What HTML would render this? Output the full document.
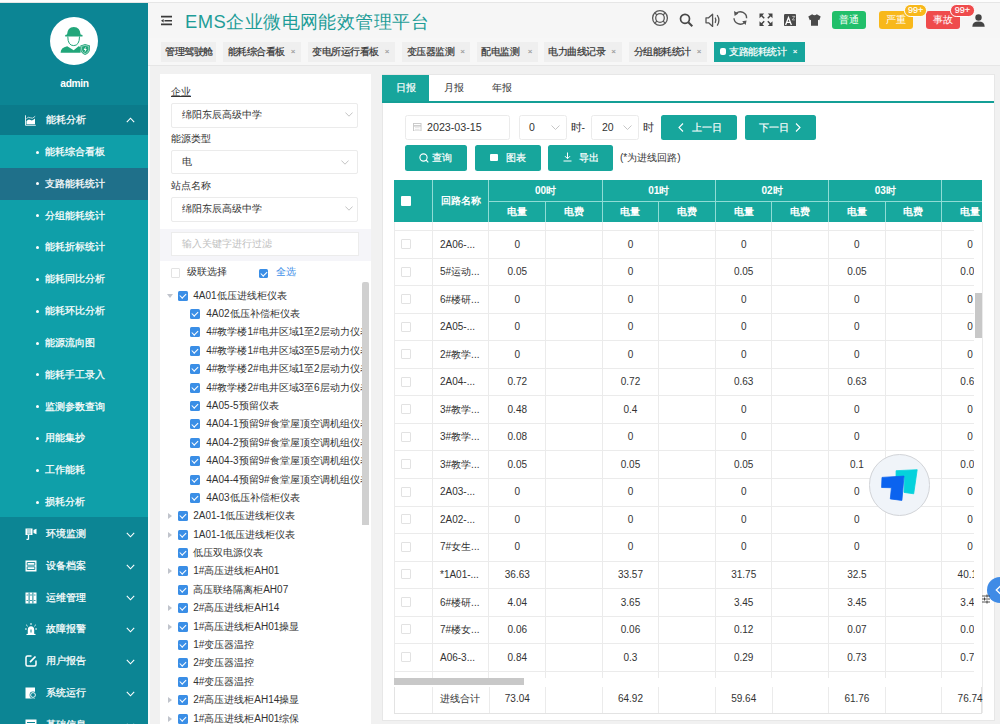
<!DOCTYPE html><html><head><meta charset="utf-8"><style>
*{box-sizing:border-box;margin:0;padding:0}
html,body{width:1000px;height:724px;overflow:hidden;background:#f1f1f1;font-family:"Liberation Sans",sans-serif;color:#333}
.a{position:absolute}
.mi{position:absolute;left:0;width:148px;height:31.8px;color:#fff;font-size:10.2px;line-height:31.8px;white-space:nowrap;-webkit-text-stroke-width:0.25px}
.mi .t{position:absolute;left:46px;top:0}
.mi svg{position:absolute}
.sub{position:absolute;left:0;width:148px;height:31.8px;color:#fff;font-size:10.2px;line-height:31.8px;white-space:nowrap;-webkit-text-stroke-width:0.25px}
.sub .t{position:absolute;left:45.2px;top:0}
.sub .d{position:absolute;left:35.5px;top:14.6px;width:3px;height:3px;border-radius:50%;background:#fff}
.tab{position:absolute;top:41.5px;height:20.5px;background:#efefef;font-size:10px;letter-spacing:-0.5px;line-height:20.5px;color:#333;white-space:nowrap;-webkit-text-stroke-width:0.2px}
.tab .x{position:absolute;top:0;font-size:8px;color:#999}
.lbl{position:absolute;font-size:10px;color:#333;line-height:12px;white-space:nowrap}
.sel{position:absolute;left:171px;width:186.5px;height:24.6px;border:1px solid #ebebeb;border-radius:2px;background:#fff;font-size:10px;line-height:22.6px;padding-left:10px;color:#333;white-space:nowrap}
.sel svg{position:absolute;right:3.6px;top:8px}
.tr{position:absolute;font-size:10px;line-height:14px;color:#333;white-space:nowrap}
.cb{position:absolute;width:10px;height:10px;border-radius:1.5px;background:#3a8ee6}
.cb:after{content:"";position:absolute;left:3.3px;top:1.2px;width:2.6px;height:5px;border:solid #fff;border-width:0 1.3px 1.3px 0;transform:rotate(45deg)}
.btn{position:absolute;background:#17a69c;border-radius:2.5px;color:#fff;font-size:10px;white-space:nowrap}
.hc{position:absolute;color:#fff;font-size:10px;font-weight:bold;text-align:center;white-space:nowrap}
.vl{position:absolute;width:1px;background:#ebebeb}
.hl{position:absolute;height:1px;background:#ebebeb}
.cell{position:absolute;font-size:10px;color:#333;text-align:center;width:56.6px;line-height:14px;white-space:nowrap}
.nm{position:absolute;font-size:10px;color:#333;left:440px;line-height:14px;white-space:nowrap}
.rcb{position:absolute;left:401.5px;width:10px;height:10px;border:1px solid #e2e2e2;border-radius:1px;background:#fff}
</style></head><body>
<div class="a" style="left:0;top:0;width:1000px;height:3px;background:#fdfdfd;border-bottom:1px solid #e6e6e6"></div>
<div class="a" style="left:0;top:3px;width:148px;height:721px;background:#0c8594"></div>
<div class="a" style="left:148px;top:3px;width:1.5px;height:721px;background:#fafafa"></div>
<div class="a" style="left:50.2px;top:16.8px;width:48.1px;height:48.1px;border-radius:50%;background:#fff"></div>
<svg class="a" style="left:48px;top:15px" width="52" height="52" viewBox="48 15 52 52">
<path d="M65.2 36.6 L82.5 36.6 L82.5 35 L80.6 34.6 Q80.2 27 73.8 26.9 Q67.4 27 67 34.6 L65.2 35 Z" fill="#22a67a"/>
<path d="M67.8 36.5 Q67.8 45.6 73.7 45.6 Q79.5 45.6 79.5 36.5" fill="none" stroke="#22a67a" stroke-width="1"/>
<path d="M60.6 52.8 Q60.6 47.6 67.2 46.2 L73.7 50.2 L78.6 46.2 L80.6 47 L80.6 52.8 Z" fill="#22a67a"/>
<path d="M80.4 45.6 L85.1 44.1 L90 45.6 L90 49.6 Q89.5 53.6 85.1 55 Q80.8 53.6 80.4 49.6 Z" fill="#22a67a"/>
<path d="M81.6 46.4 L85.1 45.3 L88.8 46.4 L88.8 49.6 Q88.4 52.6 85.1 53.8 Q81.9 52.6 81.6 49.6 Z" fill="none" stroke="#fff" stroke-width="0.5"/>
<path d="M85.8 46.5 L83.6 50 L85.1 50 L84.4 53 L86.8 49 L85.4 49 Z" fill="#fff"/>
</svg>
<div class="a" style="left:0;top:76.5px;width:149px;text-align:center;color:#fff;font-size:10.2px;letter-spacing:-0.35px;font-weight:bold;line-height:13px">admin</div>
<div class="a" style="left:0;top:104.5px;width:148px;height:30.7px;background:#0b7b8b"></div>
<div class="mi" style="top:104.5px;height:30.7px;line-height:30.7px"><span class="t">能耗分析</span></div>
<svg class="a" style="left:24px;top:114px" width="13" height="13" viewBox="24 114 13 13"><path d="M25.5 115.3 V125.3 H35.8" fill="none" stroke="#fff" stroke-width="1" opacity="0.85"/><path d="M26.3 118.8 Q28.3 116.3 30.3 117.8 Q32.3 119.3 35.2 116.3" fill="none" stroke="#fff" stroke-width="0.9" opacity="0.8"/><path d="M26.5 124.3 V121 Q28.5 118.6 30.5 120 Q32.5 121.2 35 118.6 V124.3 Z" fill="#fff"/></svg>
<svg class="a" style="left:125.5px;top:117px" width="9" height="6" viewBox="0 0 9 6"><path d="M0.8 5.2 L4.5 1.2 L8.2 5.2" fill="none" stroke="#fff" stroke-width="1.1"/></svg>
<div class="a" style="left:0;top:135.2px;width:148px;height:381.8px;background:#0f9fa9"></div>
<div class="a" style="left:0;top:168px;width:148px;height:31.8px;background:#1f708a"></div>
<div class="sub" style="top:136.00px"><span class="d"></span><span class="t">能耗综合看板</span></div>
<div class="sub" style="top:167.82px"><span class="d"></span><span class="t">支路能耗统计</span></div>
<div class="sub" style="top:199.64px"><span class="d"></span><span class="t">分组能耗统计</span></div>
<div class="sub" style="top:231.46px"><span class="d"></span><span class="t">能耗折标统计</span></div>
<div class="sub" style="top:263.28px"><span class="d"></span><span class="t">能耗同比分析</span></div>
<div class="sub" style="top:295.10px"><span class="d"></span><span class="t">能耗环比分析</span></div>
<div class="sub" style="top:326.92px"><span class="d"></span><span class="t">能源流向图</span></div>
<div class="sub" style="top:358.74px"><span class="d"></span><span class="t">能耗手工录入</span></div>
<div class="sub" style="top:390.56px"><span class="d"></span><span class="t">监测参数查询</span></div>
<div class="sub" style="top:422.38px"><span class="d"></span><span class="t">用能集抄</span></div>
<div class="sub" style="top:454.20px"><span class="d"></span><span class="t">工作能耗</span></div>
<div class="sub" style="top:486.02px"><span class="d"></span><span class="t">损耗分析</span></div>
<div class="mi" style="top:518.00px"><span class="t">环境监测</span></div>
<svg class="a" style="left:24.5px;top:528.00px" width="12" height="12" viewBox="0 0 12 12"><path d="M0.5 0.5 H7.5 V7 H0.5 Z" fill="#fff"/><path d="M2 2 H6 M2 4 H6 M2 5.8 H6" stroke="#0c8594" stroke-width="0.6"/><path d="M8.5 2 L11.5 0.8 V6.2 L8.5 5 Z" fill="#fff"/><path d="M3.5 7 V11.5 M1.5 11.5 H3.5" stroke="#fff" stroke-width="1.3"/></svg>
<svg class="a" style="left:125.5px;top:531.80px" width="9" height="6" viewBox="0 0 9 6"><path d="M0.8 0.8 L4.5 4.8 L8.2 0.8" fill="none" stroke="#fff" stroke-width="1.1"/></svg>
<div class="mi" style="top:549.82px"><span class="t">设备档案</span></div>
<svg class="a" style="left:24.5px;top:559.82px" width="12" height="12" viewBox="0 0 12 12"><path d="M0.5 0.5 H11.5 V11.5 H0.5 Z" fill="#fff"/><path d="M2.2 2.5 H9.8 V5.2 H2.2 Z M2.2 6.8 H9.8 V9.5 H2.2 Z" fill="none" stroke="#0c8594" stroke-width="0.9"/></svg>
<svg class="a" style="left:125.5px;top:563.62px" width="9" height="6" viewBox="0 0 9 6"><path d="M0.8 0.8 L4.5 4.8 L8.2 0.8" fill="none" stroke="#fff" stroke-width="1.1"/></svg>
<div class="mi" style="top:581.64px"><span class="t">运维管理</span></div>
<svg class="a" style="left:24.5px;top:591.64px" width="12" height="12" viewBox="0 0 12 12"><path d="M0.5 0.5 H11.5 V11.5 H0.5 Z" fill="#fff"/><path d="M4.1 0.5 V11.5 M7.9 0.5 V11.5" stroke="#0c8594" stroke-width="1"/><path d="M1.5 3 H3.2 M5 3 H7 M8.8 3 H10.5 M1.5 8.5 H3.2 M5 8.5 H7 M8.8 8.5 H10.5" stroke="#0c8594" stroke-width="0.8"/></svg>
<svg class="a" style="left:125.5px;top:595.44px" width="9" height="6" viewBox="0 0 9 6"><path d="M0.8 0.8 L4.5 4.8 L8.2 0.8" fill="none" stroke="#fff" stroke-width="1.1"/></svg>
<div class="mi" style="top:613.46px"><span class="t">故障报警</span></div>
<svg class="a" style="left:24.5px;top:623.46px" width="12" height="12" viewBox="0 0 12 12"><path d="M2.8 11.5 V7 Q2.8 3.3 6 3.3 Q9.2 3.3 9.2 7 V11.5 Z" fill="#fff"/><path d="M6 0 V2 M1.2 1.8 L2.6 3.2 M10.8 1.8 L9.4 3.2 M0 6 H1.8 M10.2 6 H12" stroke="#fff" stroke-width="1"/><path d="M6 6.5 V9.5" stroke="#0c8594" stroke-width="1"/><path d="M1.5 11.5 H10.5" stroke="#fff" stroke-width="1.2"/></svg>
<svg class="a" style="left:125.5px;top:627.26px" width="9" height="6" viewBox="0 0 9 6"><path d="M0.8 0.8 L4.5 4.8 L8.2 0.8" fill="none" stroke="#fff" stroke-width="1.1"/></svg>
<div class="mi" style="top:645.28px"><span class="t">用户报告</span></div>
<svg class="a" style="left:24.5px;top:655.28px" width="12" height="12" viewBox="0 0 12 12"><path d="M6.5 1 H2.5 Q1 1 1 2.5 V9.5 Q1 11 2.5 11 H9.5 Q11 11 11 9.5 V5.5" fill="none" stroke="#fff" stroke-width="1.5"/><path d="M5 7.2 L10.5 1.5" stroke="#fff" stroke-width="1.8"/></svg>
<svg class="a" style="left:125.5px;top:659.08px" width="9" height="6" viewBox="0 0 9 6"><path d="M0.8 0.8 L4.5 4.8 L8.2 0.8" fill="none" stroke="#fff" stroke-width="1.1"/></svg>
<div class="mi" style="top:677.10px"><span class="t">系统运行</span></div>
<svg class="a" style="left:24.5px;top:687.10px" width="12" height="12" viewBox="0 0 12 12"><path d="M0.5 0.5 H10 V11.5 H0.5 Z" fill="#fff"/><circle cx="8" cy="8" r="3.4" fill="#0c8594"/><circle cx="8" cy="8" r="2.4" fill="none" stroke="#fff" stroke-width="0.9"/></svg>
<svg class="a" style="left:125.5px;top:690.90px" width="9" height="6" viewBox="0 0 9 6"><path d="M0.8 0.8 L4.5 4.8 L8.2 0.8" fill="none" stroke="#fff" stroke-width="1.1"/></svg>
<div class="mi" style="top:708.92px"><span class="t">基础信息</span></div>
<svg class="a" style="left:24.5px;top:718.92px" width="12" height="12" viewBox="0 0 12 12"><path d="M0.5 0.5 H11.5 V11.5 H0.5 Z" fill="#fff"/><path d="M2 3.5 H10 M2 7 H10" stroke="#0c8594" stroke-width="1.2"/></svg>
<svg class="a" style="left:125.5px;top:722.72px" width="9" height="6" viewBox="0 0 9 6"><path d="M0.8 0.8 L4.5 4.8 L8.2 0.8" fill="none" stroke="#fff" stroke-width="1.1"/></svg>
<div class="a" style="left:148px;top:3px;width:852px;height:35px;background:#f6f6f6"></div>
<svg class="a" style="left:160px;top:14px" width="14" height="13" viewBox="0 0 14 13"><path d="M1 2.6 H12 M4.5 6.8 H12 M1 10.4 H12" stroke="#3a3a3a" stroke-width="1.6"/><path d="M1 6.8 L3.6 5 V8.6 Z" fill="#3a3a3a"/></svg>
<div class="a" style="left:185px;top:10.5px;letter-spacing:0.45px;font-size:18.4px;line-height:22px;color:#1e9d98;white-space:nowrap">EMS企业微电网能效管理平台</div>
<svg class="a" style="left:651px;top:9px" width="18" height="18" viewBox="0 0 18 18"><circle cx="9" cy="9" r="7.4" fill="none" stroke="#5a5a5a" stroke-width="1.3"/><circle cx="9" cy="9" r="4.3" fill="none" stroke="#5a5a5a" stroke-width="1.3"/><path d="M3.8 3.8 L6 6 M14.2 3.8 L12 6 M3.8 14.2 L6 12 M14.2 14.2 L12 12" stroke="#5a5a5a" stroke-width="1.2"/></svg>
<svg class="a" style="left:679px;top:12px" width="15" height="16" viewBox="0 0 15 16"><circle cx="6" cy="6.8" r="4.5" fill="none" stroke="#484848" stroke-width="1.7"/><path d="M9.3 10.2 L13.3 14.3" stroke="#484848" stroke-width="2"/></svg>
<svg class="a" style="left:705px;top:13px" width="16" height="15" viewBox="0 0 16 15"><path d="M1 4.8 H3.6 L7.6 1.2 V13.4 L3.6 9.8 H1 Z" fill="none" stroke="#555" stroke-width="1.3" stroke-linejoin="round"/><path d="M10.2 4.6 Q11.7 7.3 10.2 10" fill="none" stroke="#555" stroke-width="1.3"/><path d="M12.2 2 Q15.6 7.3 12.2 12.6" fill="none" stroke="#555" stroke-width="1.3"/></svg>
<svg class="a" style="left:728px;top:6px" width="24" height="24" viewBox="0 0 24 24"><path d="M8.3 7.2 A6.3 6.3 0 0 1 18.6 12.2" fill="none" stroke="#555" stroke-width="1.4"/><path d="M6 12.2 A6.3 6.3 0 0 0 16.6 16.4" fill="none" stroke="#555" stroke-width="1.4"/><path d="M6 5 L6.6 10 L10.4 7.6 Z M14.2 15.2 L18.6 14.4 L17.6 19 Z" fill="#555"/></svg>
<svg class="a" style="left:759px;top:13px" width="14" height="14" viewBox="0 0 14 14"><path d="M0.5 0.5 H5.2 L0.5 5.2 Z M13.5 0.5 H8.8 L13.5 5.2 Z M0.5 13 H5.2 L0.5 8.3 Z M13.5 13 H8.8 L13.5 8.3 Z" fill="#444"/><path d="M2 2 L5.2 5.2 M12 2 L8.8 5.2 M2 11.5 L5.2 8.3 M12 11.5 L8.8 8.3" stroke="#444" stroke-width="1.5"/></svg>
<svg class="a" style="left:784.3px;top:14px" width="12.2" height="12.2" viewBox="0 0 12.2 12.2"><rect x="0" y="0" width="12.2" height="12.2" rx="1.2" fill="#4a4a4a"/><path d="M1.6 11 L4.5 3.6 L7.4 11 M2.7 8.4 H6.3" fill="none" stroke="#fff" stroke-width="1.3"/><path d="M8.3 2.4 H10.9 L8.3 5.9 H10.9" fill="none" stroke="#ddd" stroke-width="0.7"/></svg>
<svg class="a" style="left:807.5px;top:14px" width="13" height="12" viewBox="0 0 13 12"><path d="M4.2 0.3 L0.3 2.6 L1.8 6.2 L3 5.7 V11.8 H10 V5.7 L11.2 6.2 L12.7 2.6 L8.8 0.3 Q6.5 2 4.2 0.3 Z" fill="#4a4a4a"/></svg>
<div class="a" style="left:832px;top:10.6px;width:34.4px;height:18px;background:#21bf6a;border-radius:3px;color:#fff;font-size:9.5px;line-height:18px;text-align:center">普通</div>
<div class="a" style="left:879px;top:10.6px;width:34px;height:18px;background:#f8b81b;border-radius:3px;color:#fff;font-size:9.5px;line-height:18px;text-align:center">严重</div>
<div class="a" style="left:926.4px;top:10.6px;width:33.6px;height:18px;background:#ef4b4c;border-radius:3px;color:#fff;font-size:9.5px;line-height:18px;text-align:center">事故</div>
<div class="a" style="left:903.8px;top:4.2px;width:23.6px;height:12.4px;background:#f8b81b;border:1px solid #fff;border-radius:6.2px;color:#fff;font-size:9px;line-height:10.4px;-webkit-text-stroke-width:0.15px;text-align:center">99+</div>
<div class="a" style="left:950px;top:4.2px;width:24.8px;height:12.4px;background:#ef4b4c;border:1px solid #fff;border-radius:6.2px;color:#fff;font-size:9px;line-height:10.4px;-webkit-text-stroke-width:0.15px;text-align:center">99+</div>
<svg class="a" style="left:972px;top:13.5px" width="13" height="13" viewBox="0 0 13 13"><circle cx="6.5" cy="3.5" r="3.2" fill="#444"/><path d="M0.3 12.8 Q0.3 7.5 6.5 7.5 Q12.7 7.5 12.7 12.8 Z" fill="#444"/></svg>
<div class="a" style="left:148px;top:38px;width:852px;height:28px;background:#f7f7f7;border-bottom:1px solid #e6e6e6"></div>
<div class="tab" style="left:160.6px;width:55.4px;padding-left:4.6px">管理驾驶舱</div>
<div class="tab" style="left:223px;width:78.0px;padding-left:4.6px">能耗综合看板<span class="x" style="right:6px">×</span></div>
<div class="tab" style="left:307.8px;width:87.2px;padding-left:4.6px">变电所运行看板<span class="x" style="right:6px">×</span></div>
<div class="tab" style="left:402px;width:68.3px;padding-left:4.6px">变压器监测<span class="x" style="right:6px">×</span></div>
<div class="tab" style="left:476.8px;width:61.2px;padding-left:4.6px">配电监测<span class="x" style="right:6px">×</span></div>
<div class="tab" style="left:543.5px;width:78.0px;padding-left:4.6px">电力曲线记录<span class="x" style="right:6px">×</span></div>
<div class="tab" style="left:629px;width:78.0px;padding-left:4.6px">分组能耗统计<span class="x" style="right:6px">×</span></div>
<div class="tab" style="left:714px;width:91px;background:#17a59c;color:#fff;padding-left:15px">支路能耗统计<span class="x" style="right:8px;color:#fff">×</span></div>
<div class="a" style="left:719.6px;top:48.4px;width:6px;height:6.3px;border-radius:2px;background:#fff"></div>
<div class="a" style="left:160px;top:74.4px;width:210.6px;height:650px;background:#fff"></div>
<div class="lbl" style="left:171px;top:86px;text-decoration:underline">企业</div>
<div class="sel" style="top:103px">绵阳东辰高级中学<svg width="8" height="5" viewBox="0 0 8 5"><path d="M0.4 0.5 L4 4.2 L7.6 0.5" fill="none" stroke="#bdbdbd" stroke-width="0.9"/></svg></div>
<div class="lbl" style="left:171px;top:133.3px">能源类型</div>
<div class="sel" style="top:149.5px">电<svg style="right:7.7px;top:9px" width="8" height="5" viewBox="0 0 8 5"><path d="M0.4 0.5 L4 4.2 L7.6 0.5" fill="none" stroke="#bdbdbd" stroke-width="0.9"/></svg></div>
<div class="lbl" style="left:171px;top:180px">站点名称</div>
<div class="sel" style="top:197px">绵阳东辰高级中学<svg width="8" height="5" viewBox="0 0 8 5"><path d="M0.4 0.5 L4 4.2 L7.6 0.5" fill="none" stroke="#bdbdbd" stroke-width="0.9"/></svg></div>
<div class="a" style="left:160px;top:228.8px;width:210.6px;height:32px;background:#f5f5f9"></div>
<div class="a" style="left:171.2px;top:232px;width:187.5px;height:24.3px;background:#fff;border:1px solid #ececec;font-size:10px;line-height:22.3px;padding-left:9.5px;color:#c0c0c0;white-space:nowrap">输入关键字进行过滤</div>
<div class="a" style="left:170.8px;top:268.4px;width:9.6px;height:9.8px;border:1px solid #e3e3e3;border-radius:1px;background:#fff"></div>
<div class="lbl" style="left:186.6px;top:266px">级联选择</div>
<div class="cb" style="left:258.8px;top:268.6px;width:9.7px;height:9.7px"></div>
<div class="lbl" style="left:276.4px;top:266px;color:#3d8ee8">全选</div>
<div class="a" style="left:160px;top:282px;width:202px;height:442px;overflow:hidden">
<svg class="a" style="left:6.5px;top:11.60px" width="6" height="4" viewBox="0 0 6 4"><path d="M0 0 H6 L3 4 Z" fill="#c0c4cc"/></svg>
<div class="cb" style="left:17.80000000000001px;top:8.60px"></div>
<div class="tr" style="left:33.19999999999999px;top:6.60px">4A01低压进线柜仪表</div>
<div class="cb" style="left:29.80000000000001px;top:26.99px"></div>
<div class="tr" style="left:46.30000000000001px;top:24.99px">4A02低压补偿柜仪表</div>
<div class="cb" style="left:29.80000000000001px;top:45.38px"></div>
<div class="tr" style="left:46.30000000000001px;top:43.38px">4#教学楼1#电井区域1至2层动力仪表</div>
<div class="cb" style="left:29.80000000000001px;top:63.77px"></div>
<div class="tr" style="left:46.30000000000001px;top:61.77px">4#教学楼1#电井区域3至5层动力仪表</div>
<div class="cb" style="left:29.80000000000001px;top:82.16px"></div>
<div class="tr" style="left:46.30000000000001px;top:80.16px">4#教学楼2#电井区域1至2层动力仪表</div>
<div class="cb" style="left:29.80000000000001px;top:100.55px"></div>
<div class="tr" style="left:46.30000000000001px;top:98.55px">4#教学楼2#电井区域3至6层动力仪表</div>
<div class="cb" style="left:29.80000000000001px;top:118.94px"></div>
<div class="tr" style="left:46.30000000000001px;top:116.94px">4A05-5预留仪表</div>
<div class="cb" style="left:29.80000000000001px;top:137.33px"></div>
<div class="tr" style="left:46.30000000000001px;top:135.33px">4A04-1预留9#食堂屋顶空调机组仪表</div>
<div class="cb" style="left:29.80000000000001px;top:155.72px"></div>
<div class="tr" style="left:46.30000000000001px;top:153.72px">4A04-2预留9#食堂屋顶空调机组仪表</div>
<div class="cb" style="left:29.80000000000001px;top:174.11px"></div>
<div class="tr" style="left:46.30000000000001px;top:172.11px">4A04-3预留9#食堂屋顶空调机组仪表</div>
<div class="cb" style="left:29.80000000000001px;top:192.50px"></div>
<div class="tr" style="left:46.30000000000001px;top:190.50px">4A04-4预留9#食堂屋顶空调机组仪表</div>
<div class="cb" style="left:29.80000000000001px;top:210.89px"></div>
<div class="tr" style="left:46.30000000000001px;top:208.89px">4A03低压补偿柜仪表</div>
<svg class="a" style="left:7.5px;top:231.28px" width="4" height="6" viewBox="0 0 4 6"><path d="M0 0 V6 L4 3 Z" fill="#c0c4cc"/></svg>
<div class="cb" style="left:17.80000000000001px;top:229.28px"></div>
<div class="tr" style="left:33.19999999999999px;top:227.28px">2A01-1低压进线柜仪表</div>
<svg class="a" style="left:7.5px;top:249.67px" width="4" height="6" viewBox="0 0 4 6"><path d="M0 0 V6 L4 3 Z" fill="#c0c4cc"/></svg>
<div class="cb" style="left:17.80000000000001px;top:247.67px"></div>
<div class="tr" style="left:33.19999999999999px;top:245.67px">1A01-1低压进线柜仪表</div>
<div class="cb" style="left:17.80000000000001px;top:266.06px"></div>
<div class="tr" style="left:33.19999999999999px;top:264.06px">低压双电源仪表</div>
<svg class="a" style="left:7.5px;top:286.45px" width="4" height="6" viewBox="0 0 4 6"><path d="M0 0 V6 L4 3 Z" fill="#c0c4cc"/></svg>
<div class="cb" style="left:17.80000000000001px;top:284.45px"></div>
<div class="tr" style="left:33.19999999999999px;top:282.45px">1#高压进线柜AH01</div>
<div class="cb" style="left:17.80000000000001px;top:302.84px"></div>
<div class="tr" style="left:33.19999999999999px;top:300.84px">高压联络隔离柜AH07</div>
<svg class="a" style="left:7.5px;top:323.23px" width="4" height="6" viewBox="0 0 4 6"><path d="M0 0 V6 L4 3 Z" fill="#c0c4cc"/></svg>
<div class="cb" style="left:17.80000000000001px;top:321.23px"></div>
<div class="tr" style="left:33.19999999999999px;top:319.23px">2#高压进线柜AH14</div>
<svg class="a" style="left:7.5px;top:341.62px" width="4" height="6" viewBox="0 0 4 6"><path d="M0 0 V6 L4 3 Z" fill="#c0c4cc"/></svg>
<div class="cb" style="left:17.80000000000001px;top:339.62px"></div>
<div class="tr" style="left:33.19999999999999px;top:337.62px">1#高压进线柜AH01操显</div>
<div class="cb" style="left:17.80000000000001px;top:358.01px"></div>
<div class="tr" style="left:33.19999999999999px;top:356.01px">1#变压器温控</div>
<div class="cb" style="left:17.80000000000001px;top:376.40px"></div>
<div class="tr" style="left:33.19999999999999px;top:374.40px">2#变压器温控</div>
<div class="cb" style="left:17.80000000000001px;top:394.79px"></div>
<div class="tr" style="left:33.19999999999999px;top:392.79px">4#变压器温控</div>
<svg class="a" style="left:7.5px;top:415.18px" width="4" height="6" viewBox="0 0 4 6"><path d="M0 0 V6 L4 3 Z" fill="#c0c4cc"/></svg>
<div class="cb" style="left:17.80000000000001px;top:413.18px"></div>
<div class="tr" style="left:33.19999999999999px;top:411.18px">2#高压进线柜AH14操显</div>
<svg class="a" style="left:7.5px;top:433.57px" width="4" height="6" viewBox="0 0 4 6"><path d="M0 0 V6 L4 3 Z" fill="#c0c4cc"/></svg>
<div class="cb" style="left:17.80000000000001px;top:431.57px"></div>
<div class="tr" style="left:33.19999999999999px;top:429.57px">1#高压进线柜AH01综保</div>
</div>
<div class="a" style="left:362.2px;top:281.6px;width:7.2px;height:243px;background:#d0d0d0;border-radius:2px 2px 0 0"></div>
<div class="a" style="left:382px;top:73.7px;width:612.5px;height:647px;background:#fff;border:1px solid #e7e7e7"></div>
<div class="a" style="left:382.2px;top:74.6px;width:47.2px;height:27.3px;background:#17a59c;color:#fff;font-size:10px;line-height:25px;text-align:center;-webkit-text-stroke-width:0.2px">日报</div>
<div class="a" style="left:382.2px;top:101.3px;width:612px;height:2.2px;background:#149f96"></div>
<div class="a" style="left:443.5px;top:81px;font-size:10px;line-height:13px;color:#333">月报</div>
<div class="a" style="left:491.5px;top:81px;font-size:10px;line-height:13px;color:#333">年报</div>
<div class="a" style="left:405.3px;top:114.5px;width:105px;height:25.4px;border:1px solid #ebebeb;border-radius:2.5px;background:#fff"></div>
<svg class="a" style="left:413px;top:122.5px" width="8.5" height="8.5" viewBox="0 0 9 9"><rect x="0.5" y="0.5" width="8" height="8" fill="none" stroke="#c8c8c8"/><path d="M0.5 3 H8.5" stroke="#c8c8c8" stroke-width="1.5"/><path d="M2 5 H7 M2 7 H7" stroke="#ddd" stroke-width="0.8"/></svg>
<div class="a" style="left:427px;top:120.5px;font-size:10.7px;line-height:13px;color:#333">2023-03-15</div>
<div class="a" style="left:518.5px;top:114.5px;width:48px;height:25.4px;border:1px solid #ebebeb;border-radius:2.5px;background:#fff"></div>
<div class="a" style="left:529px;top:120.5px;font-size:10.5px;line-height:13px">0</div>
<svg class="a" style="left:550.5px;top:125px" width="9" height="6" viewBox="0 0 9 6"><path d="M0.5 0.5 L4.5 4.5 L8.5 0.5" fill="none" stroke="#c0c0c0" stroke-width="0.9"/></svg>
<div class="a" style="left:570.5px;top:120.5px;font-size:10.5px;line-height:13px">时-</div>
<div class="a" style="left:591px;top:114.5px;width:48px;height:25.4px;border:1px solid #ebebeb;border-radius:2.5px;background:#fff"></div>
<div class="a" style="left:602px;top:120.5px;font-size:10.5px;line-height:13px">20</div>
<svg class="a" style="left:623px;top:125px" width="9" height="6" viewBox="0 0 9 6"><path d="M0.5 0.5 L4.5 4.5 L8.5 0.5" fill="none" stroke="#c0c0c0" stroke-width="0.9"/></svg>
<div class="a" style="left:643.3px;top:120.5px;font-size:10.5px;line-height:13px">时</div>
<div class="btn" style="left:661px;top:114.5px;width:75.8px;height:25.5px"></div>
<svg class="a" style="left:677.5px;top:123px" width="6" height="9" viewBox="0 0 6 9"><path d="M5 0.5 L1 4.5 L5 8.5" fill="none" stroke="#fff" stroke-width="1.1"/></svg>
<div class="a" style="left:692px;top:121px;font-size:10px;line-height:13px;color:#fff;-webkit-text-stroke-width:0.2px">上一日</div>
<div class="btn" style="left:744.5px;top:114.5px;width:71.8px;height:25.5px"></div>
<div class="a" style="left:758.7px;top:121px;font-size:10px;line-height:13px;color:#fff;-webkit-text-stroke-width:0.2px">下一日</div>
<svg class="a" style="left:794.5px;top:123px" width="6" height="9" viewBox="0 0 6 9"><path d="M1 0.5 L5 4.5 L1 8.5" fill="none" stroke="#fff" stroke-width="1.1"/></svg>
<div class="btn" style="left:404.7px;top:145px;width:62.7px;height:25.6px"></div>
<svg class="a" style="left:419px;top:152.5px" width="10" height="10" viewBox="0 0 10 10"><circle cx="4.5" cy="4.5" r="3.6" fill="none" stroke="#fff" stroke-width="1.1"/><path d="M7 7 L9.3 9.3" stroke="#fff" stroke-width="1.1"/></svg>
<div class="a" style="left:432px;top:151.3px;font-size:10px;line-height:13px;color:#fff;-webkit-text-stroke-width:0.2px">查询</div>
<div class="btn" style="left:475px;top:145px;width:65.6px;height:25.6px"></div>
<div class="a" style="left:490px;top:154px;width:8px;height:7px;background:#fff;border-radius:1px"></div>
<div class="a" style="left:506px;top:151.3px;font-size:10px;line-height:13px;color:#fff;-webkit-text-stroke-width:0.2px">图表</div>
<div class="btn" style="left:547.6px;top:145px;width:65.6px;height:25.6px"></div>
<svg class="a" style="left:562.5px;top:152px" width="9" height="10" viewBox="0 0 9 10"><path d="M4.5 0.5 V6.5 M2 4.2 L4.5 6.7 L7 4.2 M0.5 9 H8.5" fill="none" stroke="#fff" stroke-width="1"/></svg>
<div class="a" style="left:578.5px;top:151.3px;font-size:10px;line-height:13px;color:#fff;-webkit-text-stroke-width:0.2px">导出</div>
<div class="a" style="left:620px;top:151.3px;font-size:10px;line-height:13px;color:#333">(*为进线回路)</div>
<div class="a" style="left:394.3px;top:180.4px;width:587.5px;height:41.6px;background:#17a89e;overflow:hidden">
<div class="a" style="left:37.4px;top:0;width:1px;height:41.6px;background:#8fdcd5"></div>
<div class="a" style="left:94.2px;top:0;width:1px;height:41.6px;background:#8fdcd5"></div>
<div class="a" style="left:207.4px;top:0;width:1px;height:41.6px;background:#8fdcd5"></div>
<div class="a" style="left:320.6px;top:0;width:1px;height:41.6px;background:#8fdcd5"></div>
<div class="a" style="left:433.8px;top:0;width:1px;height:41.6px;background:#8fdcd5"></div>
<div class="a" style="left:547.0px;top:0;width:1px;height:41.6px;background:#8fdcd5"></div>
<div class="a" style="left:150.8px;top:20.8px;width:1px;height:20.8px;background:#8fdcd5"></div>
<div class="a" style="left:264.0px;top:20.8px;width:1px;height:20.8px;background:#8fdcd5"></div>
<div class="a" style="left:377.2px;top:20.8px;width:1px;height:20.8px;background:#8fdcd5"></div>
<div class="a" style="left:490.4px;top:20.8px;width:1px;height:20.8px;background:#8fdcd5"></div>
<div class="a" style="left:603.6px;top:20.8px;width:1px;height:20.8px;background:#8fdcd5"></div>
<div class="a" style="left:94.7px;top:20.4px;width:492.8px;height:1px;background:#8fdcd5"></div>
<div class="a" style="left:7.2px;top:16.0px;width:9.9px;height:9.5px;background:#fff;border-radius:1px"></div>
<div class="hc" style="left:37.9px;top:13.6px;width:56.8px;line-height:13px">回路名称</div>
<div class="hc" style="left:94.7px;top:3.2px;width:113.2px;line-height:13px">00时</div>
<div class="hc" style="left:94.7px;top:25.1px;width:56.6px;line-height:13px">电量</div>
<div class="hc" style="left:151.3px;top:25.1px;width:56.6px;line-height:13px">电费</div>
<div class="hc" style="left:207.9px;top:3.2px;width:113.2px;line-height:13px">01时</div>
<div class="hc" style="left:207.9px;top:25.1px;width:56.6px;line-height:13px">电量</div>
<div class="hc" style="left:264.5px;top:25.1px;width:56.6px;line-height:13px">电费</div>
<div class="hc" style="left:321.1px;top:3.2px;width:113.2px;line-height:13px">02时</div>
<div class="hc" style="left:321.1px;top:25.1px;width:56.6px;line-height:13px">电量</div>
<div class="hc" style="left:377.7px;top:25.1px;width:56.6px;line-height:13px">电费</div>
<div class="hc" style="left:434.3px;top:3.2px;width:113.2px;line-height:13px">03时</div>
<div class="hc" style="left:434.3px;top:25.1px;width:56.6px;line-height:13px">电量</div>
<div class="hc" style="left:490.9px;top:25.1px;width:56.6px;line-height:13px">电费</div>
<div class="hc" style="left:547.5px;top:3.2px;width:113.2px;line-height:13px">04时</div>
<div class="hc" style="left:547.5px;top:25.1px;width:56.6px;line-height:13px">电量</div>
<div class="hc" style="left:604.1px;top:25.1px;width:56.6px;line-height:13px">电费</div>
</div>
<div class="a" style="left:394.3px;top:222.0px;width:580.2px;height:464.0px;overflow:hidden">
<div class="hl" style="left:0;top:8.30px;width:580.2px"></div>
<div class="hl" style="left:0;top:35.82px;width:580.2px"></div>
<div class="hl" style="left:0;top:63.34px;width:580.2px"></div>
<div class="hl" style="left:0;top:90.86px;width:580.2px"></div>
<div class="hl" style="left:0;top:118.38px;width:580.2px"></div>
<div class="hl" style="left:0;top:145.90px;width:580.2px"></div>
<div class="hl" style="left:0;top:173.42px;width:580.2px"></div>
<div class="hl" style="left:0;top:200.94px;width:580.2px"></div>
<div class="hl" style="left:0;top:228.46px;width:580.2px"></div>
<div class="hl" style="left:0;top:255.98px;width:580.2px"></div>
<div class="hl" style="left:0;top:283.50px;width:580.2px"></div>
<div class="hl" style="left:0;top:311.02px;width:580.2px"></div>
<div class="hl" style="left:0;top:338.54px;width:580.2px"></div>
<div class="hl" style="left:0;top:366.06px;width:580.2px"></div>
<div class="hl" style="left:0;top:393.58px;width:580.2px"></div>
<div class="hl" style="left:0;top:421.10px;width:580.2px"></div>
<div class="hl" style="left:0;top:448.62px;width:580.2px"></div>
<div class="vl" style="left:-0.5px;top:0;height:456.0px"></div>
<div class="vl" style="left:37.4px;top:0;height:456.0px"></div>
<div class="vl" style="left:94.2px;top:0;height:456.0px"></div>
<div class="vl" style="left:150.8px;top:0;height:456.0px"></div>
<div class="vl" style="left:207.4px;top:0;height:456.0px"></div>
<div class="vl" style="left:264.0px;top:0;height:456.0px"></div>
<div class="vl" style="left:320.6px;top:0;height:456.0px"></div>
<div class="vl" style="left:377.2px;top:0;height:456.0px"></div>
<div class="vl" style="left:433.8px;top:0;height:456.0px"></div>
<div class="vl" style="left:490.4px;top:0;height:456.0px"></div>
<div class="vl" style="left:547.0px;top:0;height:456.0px"></div>
<div class="vl" style="left:603.6px;top:0;height:456.0px"></div>
<div class="rcb" style="top:17.06px;left:7.2px"></div>
<div class="nm" style="left:45.7px;top:15.76px">2A06-...</div>
<div class="cell" style="left:94.7px;top:15.76px">0</div>
<div class="cell" style="left:207.9px;top:15.76px">0</div>
<div class="cell" style="left:321.1px;top:15.76px">0</div>
<div class="cell" style="left:434.3px;top:15.76px">0</div>
<div class="cell" style="left:547.5px;top:15.76px">0</div>
<div class="rcb" style="top:44.58px;left:7.2px"></div>
<div class="nm" style="left:45.7px;top:43.28px">5#运动...</div>
<div class="cell" style="left:94.7px;top:43.28px">0.05</div>
<div class="cell" style="left:207.9px;top:43.28px">0</div>
<div class="cell" style="left:321.1px;top:43.28px">0.05</div>
<div class="cell" style="left:434.3px;top:43.28px">0.05</div>
<div class="cell" style="left:547.5px;top:43.28px">0.05</div>
<div class="rcb" style="top:72.10px;left:7.2px"></div>
<div class="nm" style="left:45.7px;top:70.80px">6#楼研...</div>
<div class="cell" style="left:94.7px;top:70.80px">0</div>
<div class="cell" style="left:207.9px;top:70.80px">0</div>
<div class="cell" style="left:321.1px;top:70.80px">0</div>
<div class="cell" style="left:434.3px;top:70.80px">0</div>
<div class="cell" style="left:547.5px;top:70.80px">0</div>
<div class="rcb" style="top:99.62px;left:7.2px"></div>
<div class="nm" style="left:45.7px;top:98.32px">2A05-...</div>
<div class="cell" style="left:94.7px;top:98.32px">0</div>
<div class="cell" style="left:207.9px;top:98.32px">0</div>
<div class="cell" style="left:321.1px;top:98.32px">0</div>
<div class="cell" style="left:434.3px;top:98.32px">0</div>
<div class="cell" style="left:547.5px;top:98.32px">0</div>
<div class="rcb" style="top:127.14px;left:7.2px"></div>
<div class="nm" style="left:45.7px;top:125.84px">2#教学...</div>
<div class="cell" style="left:94.7px;top:125.84px">0</div>
<div class="cell" style="left:207.9px;top:125.84px">0</div>
<div class="cell" style="left:321.1px;top:125.84px">0</div>
<div class="cell" style="left:434.3px;top:125.84px">0</div>
<div class="cell" style="left:547.5px;top:125.84px">0</div>
<div class="rcb" style="top:154.66px;left:7.2px"></div>
<div class="nm" style="left:45.7px;top:153.36px">2A04-...</div>
<div class="cell" style="left:94.7px;top:153.36px">0.72</div>
<div class="cell" style="left:207.9px;top:153.36px">0.72</div>
<div class="cell" style="left:321.1px;top:153.36px">0.63</div>
<div class="cell" style="left:434.3px;top:153.36px">0.63</div>
<div class="cell" style="left:547.5px;top:153.36px">0.63</div>
<div class="rcb" style="top:182.18px;left:7.2px"></div>
<div class="nm" style="left:45.7px;top:180.88px">3#教学...</div>
<div class="cell" style="left:94.7px;top:180.88px">0.48</div>
<div class="cell" style="left:207.9px;top:180.88px">0.4</div>
<div class="cell" style="left:321.1px;top:180.88px">0</div>
<div class="cell" style="left:434.3px;top:180.88px">0</div>
<div class="cell" style="left:547.5px;top:180.88px">0</div>
<div class="rcb" style="top:209.70px;left:7.2px"></div>
<div class="nm" style="left:45.7px;top:208.40px">3#教学...</div>
<div class="cell" style="left:94.7px;top:208.40px">0.08</div>
<div class="cell" style="left:207.9px;top:208.40px">0</div>
<div class="cell" style="left:321.1px;top:208.40px">0</div>
<div class="cell" style="left:434.3px;top:208.40px">0</div>
<div class="cell" style="left:547.5px;top:208.40px">0</div>
<div class="rcb" style="top:237.22px;left:7.2px"></div>
<div class="nm" style="left:45.7px;top:235.92px">3#教学...</div>
<div class="cell" style="left:94.7px;top:235.92px">0.05</div>
<div class="cell" style="left:207.9px;top:235.92px">0.05</div>
<div class="cell" style="left:321.1px;top:235.92px">0.05</div>
<div class="cell" style="left:434.3px;top:235.92px">0.1</div>
<div class="cell" style="left:547.5px;top:235.92px">0.05</div>
<div class="rcb" style="top:264.74px;left:7.2px"></div>
<div class="nm" style="left:45.7px;top:263.44px">2A03-...</div>
<div class="cell" style="left:94.7px;top:263.44px">0</div>
<div class="cell" style="left:207.9px;top:263.44px">0</div>
<div class="cell" style="left:321.1px;top:263.44px">0</div>
<div class="cell" style="left:434.3px;top:263.44px">0</div>
<div class="cell" style="left:547.5px;top:263.44px">0</div>
<div class="rcb" style="top:292.26px;left:7.2px"></div>
<div class="nm" style="left:45.7px;top:290.96px">2A02-...</div>
<div class="cell" style="left:94.7px;top:290.96px">0</div>
<div class="cell" style="left:207.9px;top:290.96px">0</div>
<div class="cell" style="left:321.1px;top:290.96px">0</div>
<div class="cell" style="left:434.3px;top:290.96px">0</div>
<div class="cell" style="left:547.5px;top:290.96px">0</div>
<div class="rcb" style="top:319.78px;left:7.2px"></div>
<div class="nm" style="left:45.7px;top:318.48px">7#女生...</div>
<div class="cell" style="left:94.7px;top:318.48px">0</div>
<div class="cell" style="left:207.9px;top:318.48px">0</div>
<div class="cell" style="left:321.1px;top:318.48px">0</div>
<div class="cell" style="left:434.3px;top:318.48px">0</div>
<div class="cell" style="left:547.5px;top:318.48px">0</div>
<div class="rcb" style="top:347.30px;left:7.2px"></div>
<div class="nm" style="left:45.7px;top:346.00px">*1A01-...</div>
<div class="cell" style="left:94.7px;top:346.00px">36.63</div>
<div class="cell" style="left:207.9px;top:346.00px">33.57</div>
<div class="cell" style="left:321.1px;top:346.00px">31.75</div>
<div class="cell" style="left:434.3px;top:346.00px">32.5</div>
<div class="cell" style="left:547.5px;top:346.00px">40.12</div>
<div class="rcb" style="top:374.82px;left:7.2px"></div>
<div class="nm" style="left:45.7px;top:373.52px">6#楼研...</div>
<div class="cell" style="left:94.7px;top:373.52px">4.04</div>
<div class="cell" style="left:207.9px;top:373.52px">3.65</div>
<div class="cell" style="left:321.1px;top:373.52px">3.45</div>
<div class="cell" style="left:434.3px;top:373.52px">3.45</div>
<div class="cell" style="left:547.5px;top:373.52px">3.45</div>
<div class="rcb" style="top:402.34px;left:7.2px"></div>
<div class="nm" style="left:45.7px;top:401.04px">7#楼女...</div>
<div class="cell" style="left:94.7px;top:401.04px">0.06</div>
<div class="cell" style="left:207.9px;top:401.04px">0.06</div>
<div class="cell" style="left:321.1px;top:401.04px">0.12</div>
<div class="cell" style="left:434.3px;top:401.04px">0.07</div>
<div class="cell" style="left:547.5px;top:401.04px">0.05</div>
<div class="rcb" style="top:429.86px;left:7.2px"></div>
<div class="nm" style="left:45.7px;top:428.56px">A06-3...</div>
<div class="cell" style="left:94.7px;top:428.56px">0.84</div>
<div class="cell" style="left:207.9px;top:428.56px">0.3</div>
<div class="cell" style="left:321.1px;top:428.56px">0.29</div>
<div class="cell" style="left:434.3px;top:428.56px">0.73</div>
<div class="cell" style="left:547.5px;top:428.56px">0.75</div>
</div>
<div class="vl" style="left:981.8px;top:222px;height:491px"></div>
<div class="a" style="left:974.6px;top:293px;width:7.4px;height:44.5px;background:#c8c8c8"></div>
<div class="a" style="left:394px;top:678.4px;width:130.3px;height:6.5px;background:#c8c8c8"></div>
<div class="a" style="left:394.3px;top:686.5px;width:587.5px;height:27px;border:1px solid #e3e3e3;border-top:none;background:#fff"></div>
<div class="vl" style="left:431.7px;top:686.5px;height:26px"></div>
<div class="vl" style="left:488.5px;top:686.5px;height:26px"></div>
<div class="vl" style="left:545.1px;top:686.5px;height:26px"></div>
<div class="vl" style="left:601.7px;top:686.5px;height:26px"></div>
<div class="vl" style="left:658.3px;top:686.5px;height:26px"></div>
<div class="vl" style="left:714.9px;top:686.5px;height:26px"></div>
<div class="vl" style="left:771.5px;top:686.5px;height:26px"></div>
<div class="vl" style="left:828.1px;top:686.5px;height:26px"></div>
<div class="vl" style="left:884.7px;top:686.5px;height:26px"></div>
<div class="vl" style="left:941.3px;top:686.5px;height:26px"></div>
<div class="nm" style="left:440px;top:692px">进线合计</div>
<div class="cell" style="left:489.0px;top:692px">73.04</div>
<div class="cell" style="left:602.2px;top:692px">64.92</div>
<div class="cell" style="left:715.4px;top:692px">59.64</div>
<div class="cell" style="left:828.6px;top:692px">61.76</div>
<div class="cell" style="left:941.8px;top:692px">76.74</div>
<div class="a" style="left:868.6px;top:454.2px;width:61.8px;height:61.8px;border-radius:50%;background:#f0f4f9;border:1px solid #d2d4d8"></div>
<svg class="a" style="left:868px;top:454px" width="64" height="64" viewBox="0 0 64 64">
<polygon points="28.1,16.7 49.2,15.7 45.7,39.8 36.0,38.4 36.5,23.0 28.0,23.5" fill="#05d2dc" stroke="#05d2dc" stroke-width="0.8" stroke-linejoin="round"/>
<polygon points="14.0,23.4 36.0,22.1 33.9,46.4 22.3,44.9 23.4,33.7 13.6,33.5" fill="#0b63ef" stroke="#0b63ef" stroke-width="0.8" stroke-linejoin="round"/>
</svg>
<div class="a" style="left:986.8px;top:577px;width:26px;height:26px;border-radius:50%;background:#3f8be6"></div>
<svg class="a" style="left:995px;top:585px" width="6" height="10" viewBox="0 0 6 10"><path d="M5.5 1 L1.3 5 L5.5 9" fill="none" stroke="#fff" stroke-width="1.3"/></svg>
<svg class="a" style="left:982px;top:594px" width="8" height="10" viewBox="0 0 8 10"><path d="M0 2 H8 M0 5 H8 M0 8 H8" stroke="#444" stroke-width="0.9"/><path d="M5 0.5 V3.5 M2.5 3.5 V6.5 M5 6.5 V9.5" stroke="#444" stroke-width="1"/></svg>
</body></html>
